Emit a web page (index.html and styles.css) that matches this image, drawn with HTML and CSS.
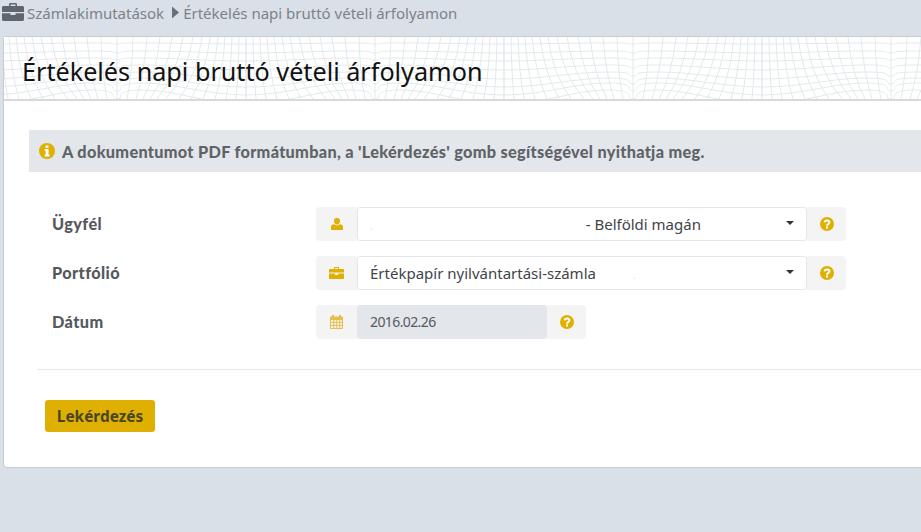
FILE: index.html
```html
<!DOCTYPE html>
<html lang="hu">
<head>
<meta charset="utf-8">
<title>Értékelés napi bruttó vételi árfolyamon</title>
<link rel="stylesheet" href="styles.css">
</head>
<body>
<nav class="crumbs">
  <svg class="crumb-icon" viewBox="0 0 22 18"><path fill="#5f6670" d="M7 3V1.500C7 .7 7.700 0 8.500 0h5c.8 0 1.500.7 1.500 1.500V3h5.500c.8 0 1.500.7 1.500 1.500V9H0V4.500C0 3.700.7 3 1.500 3H7zm1.500 0h5V1.500h-5V3zM0 10.300h8.500V12h5v-1.700H22V16.500c0 .8-.7 1.500-1.500 1.500h-19C.7 18 0 17.300 0 16.500z"/></svg>
  <span>Számlakimutatások</span>
  <svg class="crumb-arrow" viewBox="0 0 7 12"><path fill="#6b7078" d="M0 0l7 6-7 6z"/></svg>
  <span>Értékelés napi bruttó vételi árfolyamon</span>
</nav>
<main class="card">
  <header class="card-head">
    <svg class="guilloche" width="100%" height="62" aria-hidden="true">
      <defs>
        <g id="half">
          <path d="M0 0V62M7 0Q7.500 35 10 62M14 0Q15 35 20 62M21 0Q23 35 31 62M28 0Q31 35 43 62M36 0Q40 35 55 62M44 0Q49 38 67 62M53 0Q59 38 80 62M63 0Q69 38 89 62M74 0Q79 38 96 62M86 0Q90 38 103 62M99 0Q102 38 110 62M113 0Q114 38 119 62M129 0V62"/>
          <path d="M0 7C40 7 70 6 103 6S120 7 129 7M0 16C40 16 70 14 103 14S120 16 129 16M0 24C40 24 70 21 103 21S120 23 129 23M0 33C40 33 70 28 103 28S120 31 129 31M0 42C40 42 70 35 103 35S120 39 129 39M0 50C40 50 70 41 103 41S120 47 129 47M0 58C40 58 70 46 103 46S120 54 129 54M0 67C40 67 70 53 103 53S120 62 129 62"/>
        </g>
        <pattern id="tile" width="258" height="62" x="113" y="0" patternUnits="userSpaceOnUse">
          <g fill="none" stroke="#e2e9eb" stroke-width="1">
            <use href="#half" transform="translate(129 0)"/>
            <use href="#half" transform="translate(129 0) scale(-1 1)"/>
          </g>
        </pattern>
      </defs>
      <rect width="100%" height="62" fill="url(#tile)"/>
    </svg>
    <h1>Értékelés napi bruttó vételi árfolyamon</h1>
  </header>
  <section class="card-body">
    <div class="notice">
      <svg class="notice-icon" viewBox="0 0 16 16"><circle cx="8" cy="8" r="8" fill="#e0b000"/><path fill="#fff" d="M6.500 2.500h3v2.300h-3zM5.700 6h3.800v5.500h1v2H5.700v-2h1V8h-1z"/></svg>
      <span>A dokumentumot PDF formátumban, a 'Lekérdezés' gomb segítségével nyithatja meg.</span>
    </div>
    <form class="form">
      <div class="row">
        <label>Ügyfél</label>
        <div class="group">
          <span class="addon left"><svg class="ico" viewBox="0 0 12 12"><path fill="#e0b000" d="M6 0a3 3 0 0 1 3 3.300C9 5 7.800 6.500 6 6.500S3 5 3 3.300A3 3 0 0 1 6 0zM3.200 6.300C4 7 5 7.400 6 7.400s2-.4 2.800-1.100c1.800.2 3.200 1 3.200 2.700V11c0 .6-.4 1-1 1H1c-.6 0-1-.4-1-1V9c0-1.700 1.400-2.500 3.200-2.700z"/></svg></span>
          <div class="select"><span class="speck">.</span><span class="val-client">- Belföldi magán</span><i class="caret"></i></div>
          <span class="addon right"><svg class="ico-q" viewBox="0 0 14 14"><circle cx="7" cy="7" r="7" fill="#e0b000"/><path fill="none" stroke="#fff" stroke-width="2" d="M4.600 5.300C4.800 4 5.800 3.400 7 3.400c1.400 0 2.400.8 2.400 1.900 0 1.800-2.400 1.700-2.400 3.400"/><rect x="6" y="9.500" width="2" height="2" fill="#fff"/></svg></span>
        </div>
      </div>
      <div class="row">
        <label>Portfólió</label>
        <div class="group">
          <span class="addon left"><svg class="ico-brief" viewBox="0 0 15 12"><path fill="#e0b000" d="M5 2V1c0-.6.4-1 1-1h3c.6 0 1 .4 1 1v1h4c.6 0 1 .4 1 1v2.500H0V3c0-.6.4-1 1-1h4zm1 0h3V1H6v1zM0 6.500h6V8h3V6.500h6V11c0 .6-.4 1-1 1H1c-.6 0-1-.4-1-1z"/></svg></span>
          <div class="select"><span>Értékpapír nyilvántartási-számla</span><span class="speck speck-end">.</span><i class="caret"></i></div>
          <span class="addon right"><svg class="ico-q" viewBox="0 0 14 14"><circle cx="7" cy="7" r="7" fill="#e0b000"/><path fill="none" stroke="#fff" stroke-width="2" d="M4.600 5.300C4.800 4 5.800 3.400 7 3.400c1.400 0 2.400.8 2.400 1.900 0 1.800-2.400 1.700-2.400 3.400"/><rect x="6" y="9.500" width="2" height="2" fill="#fff"/></svg></span>
        </div>
      </div>
      <div class="row">
        <label>Dátum</label>
        <div class="group">
          <span class="addon left"><svg class="ico-cal" viewBox="0 0 13 14"><path fill="#e3c04a" fill-rule="evenodd" d="M2 0h2v1.500h5V0h2v1.500h1c.6 0 1 .4 1 1V13c0 .6-.4 1-1 1H1c-.6 0-1-.4-1-1V2.500c0-.6.4-1 1-1h1zM1 5v1.800h2.300V5zm3.300 0v1.800h2V5zm3 0v1.800h2V5zm3 0v1.800H12V5zM1 7.800v1.900h2.300V7.800zm3.300 0v1.900h2V7.800zm3 0v1.900h2V7.800zm3 0v1.900H12V7.800zM1 10.700V13h2.300v-2.300zm3.300 0V13h2v-2.300zm3 0V13h2v-2.300zm3 0V13H12v-2.300z"/></svg></span>
          <div class="date">2016.02.26</div>
          <span class="addon right"><svg class="ico-q" viewBox="0 0 14 14"><circle cx="7" cy="7" r="7" fill="#e0b000"/><path fill="none" stroke="#fff" stroke-width="2" d="M4.600 5.300C4.800 4 5.800 3.400 7 3.400c1.400 0 2.400.8 2.400 1.900 0 1.800-2.400 1.700-2.400 3.400"/><rect x="6" y="9.500" width="2" height="2" fill="#fff"/></svg></span>
        </div>
      </div>
    </form>
    <hr class="sep">
    <button class="btn" type="button">Lekérdezés</button>
  </section>
</main>
</body>
</html>
```
FILE: styles.css
```css
* { box-sizing: border-box; }
html, body { margin: 0; height: 100%; overflow: hidden; }
body { background: #dae0e7; font-family: "Noto Sans", sans-serif; color: #333; }
.crumbs { height: 36px; display: flex; align-items: flex-start; padding: 3px 0 0 2px; color: #7d8289; font-size: 15px; line-height: 20px; }
.crumb-icon { width: 22px; height: 18px; margin: 0 3px 0 0; }
.crumb-arrow { width: 7px; height: 13px; margin: 3px 4px 0 8px; }
.card { margin-left: 3px; width: 930px; height: 432px; background: #fff; border: 1px solid #c8ccd0; border-right: 0; border-radius: 4px 0 0 4px; }
.card-head { height: 64px; border-bottom: 2px solid #d7dadd; background: #fff; padding: 16px 0 0 18px; position: relative; }
.guilloche { position: absolute; left: 0; top: 0; }
h1 { margin: 0; font-size: 25.200px; font-weight: 400; line-height: 36px; color: #111; position: relative; }
.card-body { padding: 29px 0 0 25px; }
.notice { height: 42px; width: 900px; background: #e3e7eb; display: flex; align-items: center; padding-left: 10px; font-family: Lato, sans-serif; font-size: 16.300px; letter-spacing: .3px; font-weight: 900; color: #5f6368; }
.notice-icon { width: 16px; height: 16px; margin-right: 7px; }
.form { padding: 35px 0 0 23px; display: flex; flex-direction: column; gap: 15px; }
.row { display: flex; height: 34px; align-items: center; }
label { width: 264px; font-family: Lato, sans-serif; font-size: 16.300px; letter-spacing: .4px; line-height: 34px; font-weight: 900; color: #55595e; }
.group { display: flex; height: 34px; }
.addon { width: 41px; background: #f4f4f5; display: flex; align-items: center; justify-content: center; }
.addon.left { border-radius: 4px 0 0 4px; }
.addon.right { width: 39px; border-radius: 0 4px 4px 0; }
.ico { width: 12px; height: 12px; }
.ico-brief { width: 15px; height: 12px; }
.ico-cal { width: 13px; height: 14px; }
.ico-q { width: 14px; height: 14px; }
.select { width: 450px; border: 1px solid #e3e6ea; border-radius: 3px; position: relative; font-size: 15px; line-height: 32px; color: #3f444a; padding-left: 12px; }
.val-client { margin-left: 213px; }
.speck { color: #e4e6e8; font-size: 10px; }
.speck-end { margin-left: 37px; }
.caret { position: absolute; right: 12px; top: 13px; width: 0; height: 0; border: 4px solid transparent; border-top-color: #333; border-bottom: 0; }
.date { width: 190px; background: #e3e6ea; border-radius: 3px; font-size: 14px; letter-spacing: -.6px; line-height: 34px; padding-left: 13px; color: #555a60; }
.sep { margin: 30px 0 0 8px; border: 0; border-top: 1px solid #e8e9ea; width: 900px; }
.btn { display: block; margin: 30px 0 0 16px; width: 110px; height: 32px; background: #e0b000; border: 0; border-radius: 3px; font: 700 15.400px "Noto Sans", sans-serif; color: #4a4526; }
```
